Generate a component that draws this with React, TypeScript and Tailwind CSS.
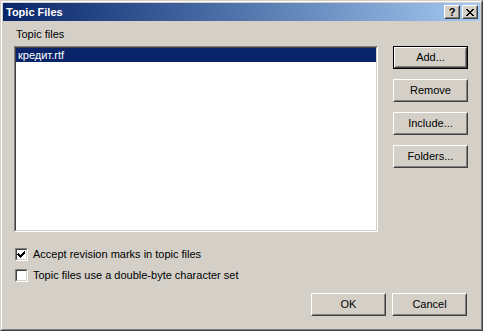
const font = "font-['Tahoma','Liberation_Sans',sans-serif]"

function Raised({ children, className = "" }: { children: React.ReactNode; className?: string }) {
  return (
    <div className={`border border-t-white border-l-white border-r-[#404040] border-b-[#404040] bg-[#d4d0c8] ${className}`}>
      <div className="flex h-full w-full items-center justify-center border border-t-[#d4d0c8] border-l-[#d4d0c8] border-r-[#808080] border-b-[#808080]">
        {children}
      </div>
    </div>
  )
}

function Button({ label, isDefault = false }: { label: string; isDefault?: boolean }) {
  if (isDefault) {
    return (
      <div className="h-[23px] w-[75px] border border-black">
        <Raised className="h-full w-full">
          <span className="text-[11px] leading-none text-black">{label}</span>
        </Raised>
      </div>
    )
  }
  return (
    <Raised className="h-[23px] w-[75px]">
      <span className="text-[11px] leading-none text-black">{label}</span>
    </Raised>
  )
}

function Checkbox({ checked, label }: { checked: boolean; label: string }) {
  return (
    <div className="flex items-center gap-[5px]">
      <div className="h-[13px] w-[13px] border border-t-[#808080] border-l-[#808080] border-r-white border-b-white">
        <div className="h-full w-full border border-t-[#404040] border-l-[#404040] border-r-[#d4d0c8] border-b-[#d4d0c8] bg-white">
          {checked && (
            <svg width="9" height="9" viewBox="0 0 9 9" shapeRendering="crispEdges">
              <path d="M1 3h1v1h1v1h1v-1h1v-1h1v-1h1v-1h1v3h-1v1h-1v1h-1v1h-1v1h-1v-1h-1v-1h-1v-1h-1z" fill="#000" />
            </svg>
          )}
        </div>
      </div>
      <span className="text-[11px] leading-[13px] text-black">{label}</span>
    </div>
  )
}

export default function App() {
  return (
    <div className={`h-[331px] w-[483px] ${font}`}>
      <div className="h-full w-full border border-t-[#d4d0c8] border-l-[#d4d0c8] border-r-[#404040] border-b-[#404040]">
        <div className="flex h-full w-full flex-col border border-t-white border-l-white border-r-[#808080] border-b-[#808080] bg-[#d4d0c8] p-px">
          {/* title bar */}
          <div className="flex h-[18px] items-center justify-between bg-gradient-to-r from-[#0a246a] to-[#a6caf0] pl-[3px] pr-[2px]">
            <span className="text-[11px] font-bold leading-none text-white">Topic Files</span>
            <div className="flex gap-[2px]">
              <Raised className="h-[14px] w-[16px]">
                <span className="text-[11px] font-bold leading-none text-black">?</span>
              </Raised>
              <Raised className="h-[14px] w-[16px]">
                <svg width="8" height="7" viewBox="0 0 8 7" shapeRendering="crispEdges">
                  <path d="M0 0h2v1h1v1h2v-1h1v-1h2v1h-1v1h-1v1h-1v1h1v1h1v1h1v1h-2v-1h-1v-1h-2v1h-1v1h-2v-1h1v-1h1v-1h1v-1h-1v-1h-1v-1h-1z" fill="#000" />
                </svg>
              </Raised>
            </div>
          </div>

          {/* body */}
          <div className="flex flex-1 flex-col pl-[11px] pr-[13px]">
            <div className="flex gap-[15px]">
              <div className="flex flex-col">
                <span className="mt-[7px] pl-[2px] text-[11px] leading-[13px] text-black">Topic files</span>
                <div className="mt-[5px] h-[186px] w-[364px] border border-t-[#808080] border-l-[#808080] border-r-white border-b-white">
                  <div className="h-full w-full border border-t-[#404040] border-l-[#404040] border-r-[#d4d0c8] border-b-[#d4d0c8] bg-white">
                    <div className="flex h-[14px] items-center bg-[#0a246a] pl-[2px]">
                      <span className="text-[11px] leading-none text-white">кредит.rtf</span>
                    </div>
                  </div>
                </div>
              </div>
              <div className="mt-[25px] flex flex-col gap-[10px]">
                <Button label="Add..." isDefault />
                <Button label="Remove" />
                <Button label="Include..." />
                <Button label="Folders..." />
              </div>
            </div>

            <div className="mt-[16px] flex flex-col gap-[8px] pl-[1px]">
              <Checkbox checked label="Accept revision marks in topic files" />
              <Checkbox checked={false} label="Topic files use a double-byte character set" />
            </div>

            <div className="mt-[11px] flex justify-end gap-[6px]">
              <Button label="OK" />
              <Button label="Cancel" />
            </div>
          </div>
        </div>
      </div>
    </div>
  )
}
